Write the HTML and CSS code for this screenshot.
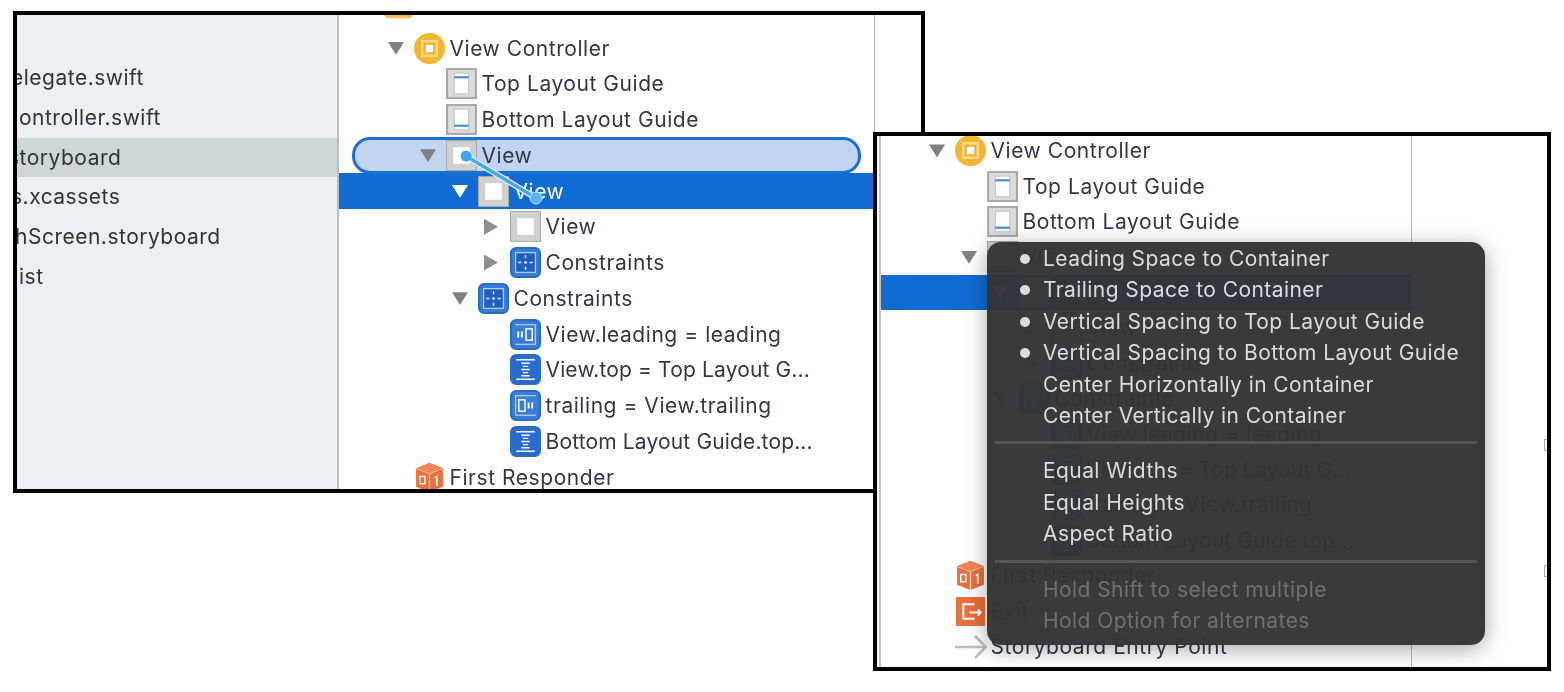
FILE: index.html
```html
<!DOCTYPE html>
<html lang="en">
<head>
  <meta charset="UTF-8" />
  <title>Xcode constraint menu</title>
  <link rel="stylesheet" href="styles.css">
</head>
<body>

  <svg class="defs" width="0" height="0">
    <symbol id="i-vc" viewBox="0 0 30 30">
      <circle cx="15" cy="15" r="15" fill="#f2b632"/>
      <rect x="7.5" y="7.5" width="15" height="15" fill="#f7cf6a" stroke="#fbe3a6" stroke-width="1"/>
      <rect x="10.5" y="10.5" width="9" height="9" fill="#fff" stroke="#efb53a" stroke-width="2"/>
    </symbol>
    <symbol id="i-scene" viewBox="0 0 30 30">
      <rect x="1" y="-10" width="28" height="30.5" rx="4" fill="#f4c150"/>
    </symbol>
    <symbol id="i-top" viewBox="0 0 30 30">
      <rect x="1" y="1" width="28" height="28" fill="#dcdcdc" stroke="#a9a9a9" stroke-width="2"/>
      <rect x="8" y="5" width="14" height="20" fill="#fff" stroke="#c4c4c4"/>
      <rect x="8" y="8" width="14" height="2" fill="#3d86d8"/>
    </symbol>
    <symbol id="i-bottom" viewBox="0 0 30 30">
      <rect x="1" y="1" width="28" height="28" fill="#dcdcdc" stroke="#a9a9a9" stroke-width="2"/>
      <rect x="8" y="5" width="14" height="20" fill="#fff" stroke="#c4c4c4"/>
      <rect x="8" y="20" width="14" height="2" fill="#3d86d8"/>
    </symbol>
    <symbol id="i-view" viewBox="0 0 30 30">
      <rect x="0.500" y="0.500" width="29" height="29" fill="#d0d0d0" stroke="#a9a9a9"/>
      <rect x="7" y="7" width="16" height="16" fill="#fff"/>
    </symbol>
    <symbol id="i-group" viewBox="0 0 30 30">
      <rect x="1" y="1" width="28" height="28" rx="5" fill="#3a7dd8" stroke="#2a6bc4" stroke-width="2"/>
      <rect x="5.500" y="5.500" width="19" height="19" fill="#1f5fbd" stroke="#cfe0f6"/>
      <path d="M15 8v3M15 13.500v3M15 19v3M8 15h3M13.500 15h3M19 15h3" stroke="#e6effb" stroke-width="1.400" fill="none"/>
    </symbol>
    <symbol id="i-leading" viewBox="0 0 30 30">
      <rect x="1" y="1" width="28" height="28" rx="5" fill="#3a7dd8" stroke="#2a6bc4" stroke-width="2"/>
      <path d="M5 5.500h20M5 24.500h20M24.500 5.500v19" stroke="#cfe0f6" stroke-width="1" fill="none"/>
      <rect x="15.500" y="9.500" width="6" height="11" fill="none" stroke="#fff" stroke-width="1.400"/>
      <path d="M8 12v6M11.500 12v6" stroke="#fff" stroke-width="1.800"/>
    </symbol>
    <symbol id="i-trailing" viewBox="0 0 30 30">
      <rect x="1" y="1" width="28" height="28" rx="5" fill="#3a7dd8" stroke="#2a6bc4" stroke-width="2"/>
      <path d="M25 5.500h-20M25 24.500h-20M5.500 5.500v19" stroke="#cfe0f6" stroke-width="1" fill="none"/>
      <rect x="8.500" y="9.500" width="6" height="11" fill="none" stroke="#fff" stroke-width="1.400"/>
      <path d="M18 12v6M21.500 12v6" stroke="#fff" stroke-width="1.800"/>
    </symbol>
    <symbol id="i-vertical" viewBox="0 0 30 30">
      <rect x="1" y="1" width="28" height="28" rx="5" fill="#2a6ccb" stroke="#2a6bc4" stroke-width="2"/>
      <path d="M6 5.500h18M6 24.500h18" stroke="#fff" stroke-width="1.400"/>
      <path d="M11 9h8M12.500 12h5M11 15h8M12.500 18h5M11 21h8" stroke="#fff" stroke-width="1.400"/>
    </symbol>
    <symbol id="i-responder" viewBox="0 0 30 30">
      <path d="M15 1l13 5v18l-13 5-13-5V6z" fill="#ea6f3c"/>
      <path d="M2 6l13 5 13-5M15 11v18" stroke="#fbd9c8" stroke-width="1.200" fill="none"/>
      <path d="M15 1l13 5-13 5-13-5z" fill="#ef8555"/>
      <rect x="5.500" y="14" width="5" height="7" fill="none" stroke="#fff" stroke-width="1.400"/>
      <path d="M20 15l2-1v9" stroke="#fff" stroke-width="1.600" fill="none"/>
    </symbol>
    <symbol id="i-exit" viewBox="0 0 30 30">
      <rect x="1" y="1" width="28" height="28" fill="#ea6f3c"/>
      <path d="M19 8H8v14h11" stroke="#fff" stroke-width="2" fill="none"/>
      <path d="M14 16h11M22 13l3 3-3 3" stroke="#fff" stroke-width="1.800" fill="none"/>
    </symbol>
    <symbol id="i-entry" viewBox="0 0 32 26">
      <path d="M0 13h30M20 2l11 11-11 11" stroke="#bdbdbd" stroke-width="2.500" fill="none"/>
    </symbol>
  </svg>

  <!-- first window: navigator and outline, drag in progress -->
  <div class="shot shot-drag">
    <aside class="files">
      <div class="file cut-more">elegate.swift</div>
      <div class="file cut-none">ontroller.swift</div>
      <div class="file selected cut-most">storyboard</div>
      <div class="file cut-more">s.xcassets</div>
      <div class="file">hScreen.storyboard</div>
      <div class="file cut-none">ist</div>
    </aside>
    <div class="outline">
      <div class="row scene"><svg class="icon"><use href="#i-scene"/></svg></div>
      <div class="row lv0"><i class="tri down"></i><svg class="icon"><use href="#i-vc"/></svg><span>View Controller</span></div>
      <div class="row lv1"><i class="tri none"></i><svg class="icon"><use href="#i-top"/></svg><span>Top Layout Guide</span></div>
      <div class="row lv1"><i class="tri none"></i><svg class="icon"><use href="#i-bottom"/></svg><span>Bottom Layout Guide</span></div>
      <div class="row lv1 drop"><i class="tri down"></i><svg class="icon"><use href="#i-view"/></svg><span>View</span></div>
      <div class="row lv2 current"><i class="tri down"></i><svg class="icon"><use href="#i-view"/></svg><span>View</span></div>
      <div class="row lv3"><i class="tri right"></i><svg class="icon"><use href="#i-view"/></svg><span>View</span></div>
      <div class="row lv3"><i class="tri right"></i><svg class="icon"><use href="#i-group"/></svg><span>Constraints</span></div>
      <div class="row lv2"><i class="tri down"></i><svg class="icon"><use href="#i-group"/></svg><span>Constraints</span></div>
      <div class="row lv3"><i class="tri none"></i><svg class="icon"><use href="#i-leading"/></svg><span>View.leading = leading</span></div>
      <div class="row lv3"><i class="tri none"></i><svg class="icon"><use href="#i-vertical"/></svg><span class="tight">View.top = Top Layout G...</span></div>
      <div class="row lv3"><i class="tri none"></i><svg class="icon"><use href="#i-trailing"/></svg><span>trailing = View.trailing</span></div>
      <div class="row lv3"><i class="tri none"></i><svg class="icon"><use href="#i-vertical"/></svg><span class="tight">Bottom Layout Guide.top...</span></div>
      <div class="row lv0"><i class="tri none"></i><svg class="icon"><use href="#i-responder"/></svg><span>First Responder</span></div>
    </div>
    <div class="canvas"></div>
    <svg class="wire" width="100" height="70" viewBox="0 0 100 70">
      <path d="M8 8L78 50" stroke="#e4f2fc" stroke-width="6"/>
      <path d="M8 8L78 50" stroke="#4aa9ee" stroke-width="3.500"/>
      <circle cx="8" cy="8" r="5.500" fill="#3fa6f2"/>
      <circle cx="78" cy="50" r="6" fill="#58b4f0" stroke="#cde6fa"/>
    </svg>
  </div>

  <!-- second window: popup after dropping -->
  <div class="shot shot-menu">
    <div class="strip"></div>
    <div class="outline">
      <div class="row lv0"><i class="tri down"></i><svg class="icon"><use href="#i-vc"/></svg><span>View Controller</span></div>
      <div class="row lv1"><i class="tri none"></i><svg class="icon"><use href="#i-top"/></svg><span>Top Layout Guide</span></div>
      <div class="row lv1"><i class="tri none"></i><svg class="icon"><use href="#i-bottom"/></svg><span>Bottom Layout Guide</span></div>
      <div class="row lv1"><i class="tri down"></i><svg class="icon"><use href="#i-view"/></svg><span>View</span></div>
      <div class="row lv2 current"><i class="tri down"></i><svg class="icon"><use href="#i-view"/></svg><span>View</span></div>
      <div class="row lv3"><i class="tri right"></i><svg class="icon"><use href="#i-view"/></svg><span>View</span></div>
      <div class="row lv3"><i class="tri right"></i><svg class="icon"><use href="#i-group"/></svg><span>Constraints</span></div>
      <div class="row lv2"><i class="tri down"></i><svg class="icon"><use href="#i-group"/></svg><span>Constraints</span></div>
      <div class="row lv3"><i class="tri none"></i><svg class="icon"><use href="#i-leading"/></svg><span>View.leading = leading</span></div>
      <div class="row lv3"><i class="tri none"></i><svg class="icon"><use href="#i-vertical"/></svg><span class="tight">View.top = Top Layout G...</span></div>
      <div class="row lv3"><i class="tri none"></i><svg class="icon"><use href="#i-trailing"/></svg><span>trailing = View.trailing</span></div>
      <div class="row lv3"><i class="tri none"></i><svg class="icon"><use href="#i-vertical"/></svg><span class="tight">Bottom Layout Guide.top...</span></div>
      <div class="row lv0"><i class="tri none"></i><svg class="icon"><use href="#i-responder"/></svg><span>First Responder</span></div>
      <div class="row lv0"><i class="tri none"></i><svg class="icon"><use href="#i-exit"/></svg><span>Exit</span></div>
      <div class="row lv0"><i class="tri none"></i><svg class="icon entry"><use href="#i-entry"/></svg><span>Storyboard Entry Point</span></div>
    </div>
    <div class="canvas"></div>
    <div class="tick tick-a"></div>
    <div class="tick tick-b"></div>

    <div class="menu">
      <div class="item on">Leading Space to Container</div>
      <div class="item on">Trailing Space to Container</div>
      <div class="item on">Vertical Spacing to Top Layout Guide</div>
      <div class="item on">Vertical Spacing to Bottom Layout Guide</div>
      <div class="item">Center Horizontally in Container</div>
      <div class="item">Center Vertically in Container</div>
      <div class="sep"></div>
      <div class="item">Equal Widths</div>
      <div class="item">Equal Heights</div>
      <div class="item">Aspect Ratio</div>
      <div class="sep"></div>
      <div class="item off">Hold Shift to select multiple</div>
      <div class="item off">Hold Option for alternates</div>
    </div>
  </div>

</body>
</html>
```

FILE: styles.css
```css
body {
  margin: 0;
  background-color: white;
  font-family: Inter, Roboto, "Liberation Sans", sans-serif;
  overflow: hidden;
}
.defs {
  position: absolute;
}

/* the two pasted screenshots sit freely on the page */
.shot {
  position: absolute;
  box-sizing: border-box;
  display: flex;
  border: 4px solid black;
  background-color: white;
  overflow: hidden;
}
.shot-drag {
  left: 13px;
  top: 11px;
  width: 912px;
  height: 482px;
}
.shot-menu {
  left: 873px;
  top: 132px;
  width: 678px;
  height: 539px;
}

.files {
  flex: none;
  box-sizing: border-box;
  width: 322px;
  padding-top: 43px;
  background-color: #edf0f0;
  border-right: 2px solid #bcbcbc;
  font-size: 21px;
  letter-spacing: 0.5px;
  color: #333;
  overflow: hidden;
  filter: blur(0.4px);
}
.file {
  height: 39.8px;
  line-height: 39.8px;
  white-space: nowrap;
  text-indent: -2px;
}
/* names run under the window edge by different amounts */
.file.cut-none { text-indent: 2px; }
.file.cut-more { text-indent: -6px; }
.file.cut-most { text-indent: -9px; }
.file.selected {
  background-color: #cfd6d8;
}

.strip {
  flex: none;
  width: 2px;
  background-color: white;
  border-right: 2px solid #c4c4c4;
}

.outline {
  flex: none;
  font-size: 21px;
  letter-spacing: 0.55px;
  color: #33364a;
  filter: blur(0.4px);
}
.shot-drag .outline {
  width: 535px;
  margin-top: -20.6px;
  border-right: 1px solid #b8b8b8;
}
.shot-drag .row {
  height: 35.75px;
}
.shot-menu .outline {
  width: 530px;
  margin-top: -3px;
  border-right: 1px solid #b8b8b8;
}
.shot-menu .row {
  height: 35.43px;
}
.canvas {
  flex: 1;
}

.row {
  display: flex;
  align-items: center;
  white-space: nowrap;
}
.row span {
  margin-left: 5px;
}
.row span.tight {
  letter-spacing: 0.15px;
}
.lv0 { padding-left: 49px; }
.lv1 { padding-left: 81px; }
.lv2 { padding-left: 113px; }
.lv3 { padding-left: 145px; }
.shot-menu .lv0 { padding-left: 48px; }
.shot-menu .lv1 { padding-left: 80px; }
.shot-menu .lv2 { padding-left: 112px; }
.shot-menu .lv3 { padding-left: 144px; }
.row.scene {
  padding-left: 44px;
}
.row.current {
  background-color: #106bd3;
  color: white;
}
.row.drop {
  position: relative;
}
.row.drop::before {
  content: "";
  position: absolute;
  left: 13px;
  right: 13px;
  top: 0;
  bottom: -1px;
  box-sizing: border-box;
  background-color: #c2d5f0;
  border: 3px solid #1a6fd2;
  border-radius: 18px;
}
.row.drop > * {
  position: relative;
}

.icon {
  flex: none;
  width: 31px;
  height: 31px;
}
.icon.entry {
  width: 32px;
  height: 26px;
  margin-right: -1px;
}
.tri {
  flex: none;
  width: 16px;
  height: 16px;
  margin-right: 9.5px;
}
.tri.down {
  background-color: #808080;
  clip-path: polygon(0 12%, 100% 12%, 50% 92%);
}
.tri.right {
  width: 14px;
  margin-right: 11.5px;
  background-color: #8f8f8f;
  clip-path: polygon(0 0, 100% 50%, 0 100%);
}
.current .tri.down {
  background-color: white;
}

.wire {
  position: absolute;
  left: 441px;
  top: 133px;
  filter: blur(0.4px);
}

/* small resize handles on the canvas */
.tick {
  position: absolute;
  right: 0;
  width: 3px;
  height: 12px;
  box-sizing: border-box;
  border: 1px solid #a8a8a8;
  border-right: none;
}
.tick-a { top: 303px; }
.tick-b { top: 429px; }

.menu {
  position: absolute;
  left: 110px;
  top: 106px;
  width: 498px;
  height: 403px;
  box-sizing: border-box;
  padding: 0 8px;
  padding-top: 1px;
  background-color: rgba(52, 52, 52, 0.97);
  border-radius: 14px;
  box-shadow: 0 4px 22px rgba(0, 0, 0, 0.35);
  font-size: 21px;
  letter-spacing: 0.42px;
  color: #dcdcdc;
  filter: blur(0.4px);
}
.item {
  height: 31.4px;
  line-height: 31.4px;
  padding-left: 48px;
  white-space: nowrap;
  position: relative;
}
.item.on::before {
  content: "";
  position: absolute;
  left: 25px;
  top: 11px;
  width: 10px;
  height: 10px;
  border-radius: 50%;
  background-color: #dcdcdc;
}
.item.off {
  color: #707070;
}
.sep {
  height: 3px;
  margin: 10px 0 11px;
  background-color: #555;
}
```
